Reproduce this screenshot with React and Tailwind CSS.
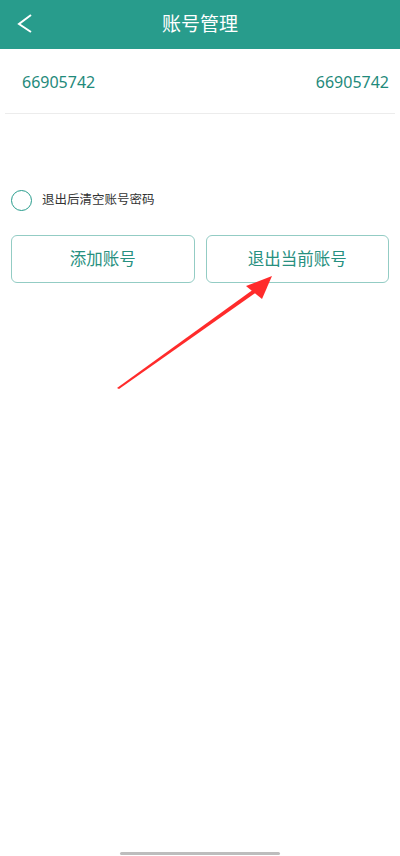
export default function App() {
  return (
    <div
      className="relative h-[856px] w-[400px] overflow-hidden bg-white"
      style={{ fontFamily: '"Noto Sans", "Noto Sans CJK SC", sans-serif' }}
    >
      <header className="relative flex h-[49px] items-center justify-center bg-[#289c8c]">
        <svg className="absolute left-[16px] top-[12px]" width="20" height="24" viewBox="0 0 20 24">
          <path d="M15 3 L3 12 L15 20" fill="none" stroke="white" strokeWidth="2" />
        </svg>
        <h1 className="text-[19px] leading-none text-white">账号管理</h1>
      </header>

      <div className="mx-[5px] flex h-[65px] items-center justify-between border-b border-[#ececec] pl-[17px] pr-[6px] pt-[2px] text-[16px] text-[#1f8a7b]">
        <span>66905742</span>
        <span>66905742</span>
      </div>

      <div className="mt-[76px] flex items-center gap-[10px] px-[11px]">
        <span className="h-[21px] w-[21px] rounded-full border-[1.5px] border-[#279c8c]" />
        <span className="text-[12.5px] text-[#333333]">退出后清空账号密码</span>
      </div>

      <div className="mt-[24px] flex gap-[11px] px-[11px]">
        <button className="flex h-[48px] flex-1 items-center justify-center rounded-[6px] border border-[#93ccc4] text-[16.5px] text-[#279080]">
          添加账号
        </button>
        <button className="flex h-[48px] flex-1 items-center justify-center rounded-[6px] border border-[#93ccc4] text-[16.5px] text-[#279080]">
          退出当前账号
        </button>
      </div>

      <svg className="absolute left-0 top-0" width="400" height="856" viewBox="0 0 400 856">
        <path d="M117 388 L258 286 L261 289 L119 389 Z" fill="#ff2b2b" />
        <path d="M272 276 L246 286 L262 299 Z" fill="#ff2b2b" />
      </svg>

      <div className="absolute bottom-[1px] left-[120px] h-[3px] w-[160px] rounded-full bg-[#bdbdbd]" />
    </div>
  );
}
